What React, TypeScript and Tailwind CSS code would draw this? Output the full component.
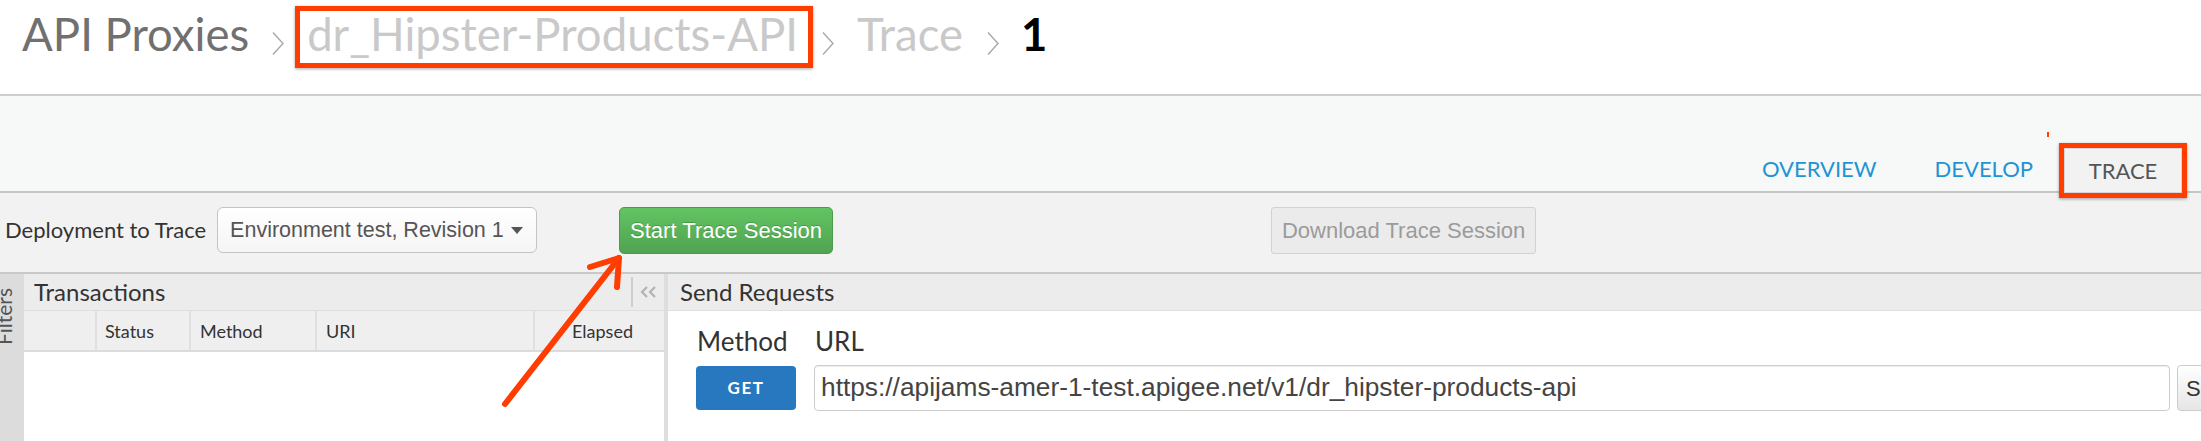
import React from "react";

function Chevron({ className }: { className?: string }) {
  return (
    <svg className={className} width="12" height="23" viewBox="0 0 12 23" fill="none">
      <polyline points="1,0.5 11,11.5 1,22.5" stroke="#a8a8a8" strokeWidth="1.4" />
    </svg>
  );
}

function Collapse() {
  return (
    <svg className="ml-[6px] mr-[7px] shrink-0" width="18" height="12" viewBox="0 0 18 12" fill="none">
      <polyline points="8,1 3,6 8,11" stroke="#b3b3b3" strokeWidth="2.2" />
      <polyline points="16,1 11,6 16,11" stroke="#b3b3b3" strokeWidth="2.2" />
    </svg>
  );
}

export default function App() {
  return (
    <div className="relative h-[441px] w-[2201px] overflow-hidden bg-white [font-family:Lato,sans-serif]">
      {/* Breadcrumb */}
      <div className="flex h-[94px] items-start pl-[22px] pt-[6px]">
        <span className="mt-[5px] text-[45.5px] leading-none text-[#707070]">API Proxies</span>
        <Chevron className="ml-[23px] mt-[26px] shrink-0" />
        <span className="ml-[11px] border-[5px] border-[#ff3d00] pb-[6px] pl-[7px] pr-[10px] text-[45.5px] leading-none text-[#c9c9c9] shadow-[0_1px_3px_rgba(0,0,0,0.35)]">
          dr_Hipster-Products-API
        </span>
        <Chevron className="ml-[9px] mt-[26px] shrink-0" />
        <span className="ml-[23px] mt-[5px] text-[45.5px] leading-none text-[#c9c9c9]">Trace</span>
        <Chevron className="ml-[24px] mt-[26px] shrink-0" />
        <span className="ml-[22px] mt-[5px] text-[45.5px] font-bold leading-none text-black">1</span>
      </div>
      <div className="h-[2px] bg-[#cecece]" />

      {/* Tabs */}
      <div className="relative flex h-[97px] items-end justify-end border-b-2 border-[#c6c6c6] bg-[#f7f8f8] pr-[14px]">
        <span className="absolute left-[2047px] top-[36px] h-[5px] w-[2px] bg-[#ff3d00]" />
        <span className="mb-[11px] text-[22px] leading-none text-[#1f94d4]">OVERVIEW</span>
        <span className="mb-[11px] ml-[58px] text-[22px] leading-none text-[#1f94d4]">DEVELOP</span>
        <div className="relative z-10 -mb-[7px] ml-[26px] h-[55px] w-[128px] border-[5px] border-[#ff3d00] shadow-[0_1px_3px_rgba(0,0,0,0.35)]">
          <div className="flex h-full items-center justify-center border border-[#d6d6d6] bg-[#f2f2f2] text-[22px] leading-none text-[#555]">
            TRACE
          </div>
        </div>
      </div>

      {/* Toolbar */}
      <div className="flex h-[81px] items-center border-b-2 border-[#c9c9c9] bg-[#f2f2f2] pb-[5px] pl-[5px]">
        <span className="text-[22px] leading-none text-[#333]">Deployment to Trace</span>
        <div className="ml-[11px] flex h-[46px] w-[320px] shrink-0 items-center rounded-[6px] border border-[#c4c4c4] bg-linear-to-b from-white to-[#f5f5f5] pl-[12px] text-[21.5px] text-[#555] [font-family:'Liberation_Sans',Arial,sans-serif]">
          <span>Environment test, Revision 1</span>
          <svg className="ml-[7px]" width="12" height="7" viewBox="0 0 12 7">
            <path d="M0 0H12L6 7Z" fill="#555" />
          </svg>
        </div>
        <div className="ml-[82px] flex h-[47px] w-[214px] shrink-0 items-center justify-center rounded-[5px] border border-[#4c9b4c] bg-linear-to-b from-[#62c462] to-[#51a351] text-[22px] text-white [font-family:'Liberation_Sans',Arial,sans-serif] [text-shadow:0_-1px_0_rgba(0,0,0,0.2)]">
          Start Trace Session
        </div>
        <div className="ml-[438px] flex h-[47px] w-[265px] shrink-0 items-center justify-center rounded-[3px] border border-[#d2d2d2] bg-[#ebebeb] text-[22px] text-[#9b9b9b] [font-family:'Liberation_Sans',Arial,sans-serif]">
          Download Trace Session
        </div>
      </div>

      {/* Bottom panels */}
      <div className="flex h-[167px]">
        <div className="flex w-[24px] shrink-0 flex-col overflow-hidden bg-[#dcdcdc]">
          <span className="-ml-[7px] mt-[14px] rotate-180 self-start text-[21px] leading-none text-[#555] [writing-mode:vertical-rl]">
            Filters
          </span>
        </div>

        <div className="flex w-[640px] shrink-0 flex-col bg-white">
          <div className="flex h-[37px] shrink-0 items-center border-b border-[#dfdfdf] bg-[#ececec] pl-[10px]">
            <span className="text-[24px] leading-none text-[#333]">Transactions</span>
            <div className="ml-auto h-[30px] w-[2px] bg-[#cfcfcf]" />
            <Collapse />
          </div>
          <div className="flex h-[41px] shrink-0 border-b-2 border-[#dcdcdc] bg-[#efefef] text-[18px] leading-none text-[#333]">
            <div className="w-[73px] shrink-0 border-r-2 border-[#e0e0e0]" />
            <div className="flex w-[94px] shrink-0 items-center border-r-2 border-[#e0e0e0] pl-[8px]">Status</div>
            <div className="flex w-[126px] shrink-0 items-center border-r-2 border-[#e0e0e0] pl-[9px]">Method</div>
            <div className="flex w-[218px] shrink-0 items-center border-r-2 border-[#e0e0e0] pl-[9px]">URI</div>
            <div className="flex flex-1 items-center justify-end pr-[31px]">Elapsed</div>
          </div>
          <div className="flex-1 bg-white" />
        </div>

        <div className="w-[4px] shrink-0 bg-[#dedede]" />

        <div className="flex min-w-0 flex-1 flex-col overflow-hidden bg-white">
          <div className="flex h-[37px] shrink-0 items-center border-b border-[#dfdfdf] bg-[#ececec] pl-[12px]">
            <span className="text-[24px] leading-none text-[#333]">Send Requests</span>
          </div>
          <div className="grid grid-cols-[100px_max-content] items-center gap-x-[18px] gap-y-[11px] pl-[28px] pt-[17px]">
            <span className="pl-[1px] text-[26px] leading-none text-[#333]">Method</span>
            <span className="pl-[1px] text-[26px] leading-none text-[#333]">URL</span>
            <div className="flex h-[44px] items-center justify-center rounded-[4px] bg-[#2878c0] text-[17px] font-bold tracking-[1.5px] text-white">
              GET
            </div>
            <div className="flex items-center">
              <div className="flex h-[46px] w-[1356px] items-center rounded-[4px] border border-[#cccccc] bg-white pl-[6px] text-[26.3px] text-[#444] shadow-[inset_0_1px_1px_rgba(0,0,0,0.075)] [font-family:'Liberation_Sans',Arial,sans-serif]">
                https://apijams-amer-1-test.apigee.net/v1/dr_hipster-products-api
              </div>
              <div className="ml-[7px] flex h-[46px] w-[90px] shrink-0 items-center rounded-[4px] border border-[#cccccc] bg-linear-to-b from-white to-[#e6e6e6] pl-[8px] text-[22px] text-[#333] [font-family:'Liberation_Sans',Arial,sans-serif]">
                Send
              </div>
            </div>
          </div>
        </div>
      </div>

      {/* Annotation arrow */}
      <svg className="pointer-events-none absolute left-0 top-0" width="2201" height="441" viewBox="0 0 2201 441">
        <g stroke="#ff3d00" strokeWidth="6" fill="none" strokeLinecap="round" strokeLinejoin="round">
          <line x1="505" y1="404" x2="619" y2="258" />
          <polyline points="590,267 619,258 617,287" />
        </g>
      </svg>
    </div>
  );
}
